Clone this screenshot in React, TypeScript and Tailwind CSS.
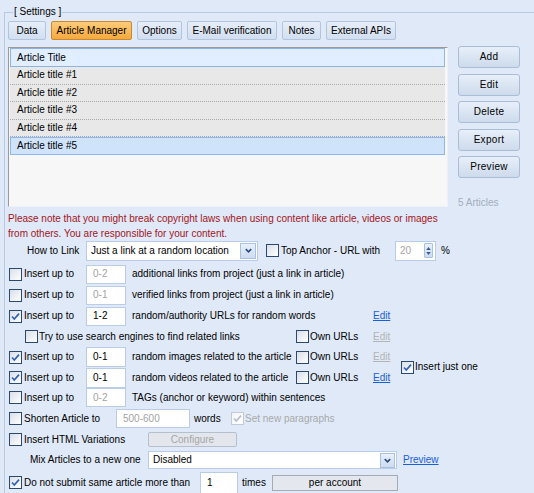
import React from "react";

function Check({ checked = false, disabled = false, className = "" }: { checked?: boolean; disabled?: boolean; className?: string }) {
  return (
    <span
      className={`inline-flex h-[13px] w-[13px] shrink-0 items-center justify-center border bg-gradient-to-br ${
        disabled ? "border-[#c3cad6] from-[#f2f4f7] to-white" : "border-[#2b4872] from-[#d9dfe8] to-white"
      } ${className}`}
    >
      {checked && (
        <svg viewBox="0 0 11 11" className="h-[11px] w-[11px]">
          <path d="M2 5.5 L4.3 8 L9 2.6" fill="none" stroke={disabled ? "#b7c0cc" : "#3564b4"} strokeWidth="1.7" />
        </svg>
      )}
    </span>
  );
}

function Input({ value, w, h = "h-[19px]", gray = false }: { value: string; w: string; h?: string; gray?: boolean }) {
  return (
    <div className={`flex shrink-0 items-center border border-[#b9cde6] bg-white pl-[6px] ${w} ${h} ${gray ? "text-[#a3a3a3]" : "text-black"}`}>
      {value}
    </div>
  );
}

function Arrow({ size }: { size: string }) {
  return (
    <div className={`flex shrink-0 items-center justify-center border border-[#a9c1e0] bg-gradient-to-b from-[#e8f0fb] to-[#cddcf0] ${size}`}>
      <svg viewBox="0 0 10 10" className="h-[9px] w-[9px]">
        <path d="M2 3.5 L5 6.5 L8 3.5" fill="none" stroke="#2e4b7e" strokeWidth="1.8" />
      </svg>
    </div>
  );
}

function Tab({ label, w, active = false }: { label: string; w: string; active?: boolean }) {
  return (
    <div
      className={`flex h-[19px] shrink-0 items-center justify-center rounded-[2px] border bg-gradient-to-b ${w} ${
        active ? "border-[#c9892e] from-[#fccb78] to-[#f6a93c]" : "border-[#b2c5dd] from-[#e6eef9] to-[#d2dff0]"
      }`}
    >
      {label}
    </div>
  );
}

function SideButton({ label }: { label: string }) {
  return (
    <div className="flex h-[22px] w-[62px] items-center justify-center rounded-[3px] border border-[#a9bdd6] bg-gradient-to-b from-[#e7eff9] to-[#cedbec] tracking-[0.3px]">
      {label}
    </div>
  );
}

const rows = ["Article title #1", "Article title #2", "Article title #3", "Article title #4"];

export default function App() {
  return (
    <div className="h-[493px] w-[534px] overflow-hidden bg-[#dfe9f8] font-['Liberation_Sans',Arial,sans-serif] text-[10px] leading-none text-black">
      <fieldset className="ml-[4px] mt-[6px] w-[560px] border border-[#b7cae2] pl-[3px] pt-[3px]">
        <legend className="ml-[5px] px-[1px] text-[10px] leading-[12px]">[ Settings ]</legend>

        {/* tabs */}
        <div className="flex gap-[5px]">
          <Tab label="Data" w="w-[38px]" />
          <Tab label="Article Manager" w="w-[81px]" active />
          <Tab label="Options" w="w-[45px]" />
          <Tab label="E-Mail verification" w="w-[90px]" />
          <Tab label="Notes" w="w-[39px]" />
          <Tab label="External APIs" w="w-[70px]" />
        </div>

        {/* list + buttons */}
        <div className="mt-[6px] flex">
          <div className="mt-[1px] h-[160px] w-[440px] border-b border-l border-r border-t border-b-[#eef2f8] border-l-[#9a9a9a] border-r-[#eef2f8] border-t-[#9a9a9a] bg-[#f7f7f7] pl-[1px] pr-[2px]">
            <div className="flex h-[19px] items-center border-[1.5px] border-[#8fb3e2] bg-[#e1eeff] pl-[6px]">Article Title</div>
            {rows.map((r) => (
              <div key={r} className="flex h-[17.5px] items-center border-b border-dotted border-[#a8a8a8] bg-[#e8e8e8] pl-[7px]">
                {r}
              </div>
            ))}
            <div className="flex h-[17.5px] items-center border border-[#8db5ee] bg-[#cfe3fb] pl-[6px]">Article title #5</div>
          </div>
          <div className="ml-[10px] flex flex-col gap-[5.5px]">
            <SideButton label="Add" />
            <SideButton label="Edit" />
            <SideButton label="Delete" />
            <SideButton label="Export" />
            <SideButton label="Preview" />
            <div className="mt-[13px] leading-[12px] text-[#a4adbb]">5 Articles</div>
          </div>
        </div>

        {/* warning */}
        <div className="mt-[2px] leading-[15px] text-[#a3151b]">
          Please note that you might break copyright laws when using content like article, videos or images
          <br />
          from others. You are responsible for your content.
        </div>

        {/* how to link */}
        <div className="flex h-[20px] items-center">
          <span className="ml-[19px] w-[59px]">How to Link</span>
          <div className="flex h-[20px] w-[172px] items-center justify-between border border-[#b9cde6] bg-white pl-[4px] pr-[1px]">
            <span>Just a link at a random location</span>
            <Arrow size="h-[16px] w-[16px]" />
          </div>
          <Check className="ml-[8px]" />
          <span className="ml-[2px] w-[114px]">Top Anchor - URL with</span>
          <div className="flex h-[20px] w-[41px] items-center justify-between border border-[#b9cde6] bg-white pl-[4px] pr-[2px] text-[#a3a3a3]">
            <span>20</span>
            <div className="flex h-[15px] w-[9px] flex-col items-center justify-center gap-[2px] rounded-[1px] border border-[#a9c1e0] bg-gradient-to-b from-[#e8f0fb] to-[#cddcf0]">
              <svg viewBox="0 0 6 4" className="h-[3px] w-[5px]"><path d="M0 4 L3 0 L6 4Z" fill="#3b5a8c" /></svg>
              <svg viewBox="0 0 6 4" className="h-[3px] w-[5px]"><path d="M0 0 L3 4 L6 0Z" fill="#3b5a8c" /></svg>
            </div>
          </div>
          <span className="ml-[5px]">%</span>
        </div>

        <div className="mt-[3px]" />

        {/* row 1 */}
        <div className="flex h-[21px] items-center">
          <div className="flex w-[78px] items-center">
            <Check className="ml-[1px]" />
            <span className="ml-[2px]">Insert up to</span>
          </div>
          <Input value="0-2" w="w-[40px]" gray />
          <span className="ml-[6px]">additional links from project (just a link in article)</span>
        </div>

        {/* row 2 */}
        <div className="flex h-[21px] items-center">
          <div className="flex w-[78px] items-center">
            <Check className="ml-[1px]" />
            <span className="ml-[2px]">Insert up to</span>
          </div>
          <Input value="0-1" w="w-[40px]" gray />
          <span className="ml-[6px]">verified links from project (just a link in article)</span>
        </div>

        {/* row 3 */}
        <div className="flex h-[21px] items-center">
          <div className="flex w-[78px] items-center">
            <Check checked className="ml-[1px]" />
            <span className="ml-[2px]">Insert up to</span>
          </div>
          <Input value="1-2" w="w-[40px]" />
          <span className="ml-[6px] w-[241px]">random/authority URLs for random words</span>
          <span className="text-[#1a5fd6] underline">Edit</span>
        </div>

        {/* row 4 */}
        <div className="flex h-[20px] items-center">
          <div className="flex w-[288px] items-center">
            <Check className="ml-[17px]" />
            <span className="ml-[1px]">Try to use search engines to find related links</span>
          </div>
          <div className="flex w-[77px] items-center">
            <Check />
            <span className="ml-[1px]">Own URLs</span>
          </div>
          <span className="text-[#b4b4b4] underline">Edit</span>
        </div>

        {/* rows 5 + 6 */}
        <div className="flex items-center">
          <div className="flex w-[393px] flex-col">
            <div className="flex h-[21px] items-center">
              <div className="flex w-[78px] items-center">
                <Check checked className="ml-[1px]" />
                <span className="ml-[2px]">Insert up to</span>
              </div>
              <Input value="0-1" w="w-[40px]" h="h-[20px]" />
              <span className="ml-[6px] w-[164px]">random images related to the article</span>
              <div className="flex w-[77px] items-center">
                <Check />
                <span className="ml-[1px]">Own URLs</span>
              </div>
              <span className="text-[#b4b4b4] underline">Edit</span>
            </div>
            <div className="flex h-[20px] items-center">
              <div className="flex w-[78px] items-center">
                <Check checked className="ml-[1px]" />
                <span className="ml-[2px]">Insert up to</span>
              </div>
              <Input value="0-1" w="w-[40px]" h="h-[20px]" />
              <span className="ml-[6px] w-[164px]">random videos related to the article</span>
              <div className="flex w-[77px] items-center">
                <Check />
                <span className="ml-[1px]">Own URLs</span>
              </div>
              <span className="text-[#1a5fd6] underline">Edit</span>
            </div>
          </div>
          <div className="flex items-center">
            <Check checked />
            <span className="ml-[1px]">Insert just one</span>
          </div>
        </div>

        {/* row 7 */}
        <div className="flex h-[20px] items-center">
          <div className="flex w-[78px] items-center">
            <Check className="ml-[1px]" />
            <span className="ml-[2px]">Insert up to</span>
          </div>
          <Input value="0-2" w="w-[40px]" gray />
          <span className="ml-[6px]">TAGs (anchor or keyword) within sentences</span>
        </div>

        {/* row 8 */}
        <div className="flex h-[22px] items-center">
          <div className="flex w-[108px] items-center">
            <Check className="ml-[1px]" />
            <span className="ml-[2px]">Shorten Article to</span>
          </div>
          <Input value="500-600" w="w-[74px]" gray />
          <span className="ml-[4px] w-[37px]">words</span>
          <Check checked disabled />
          <span className="ml-[1px] text-[#a9a9a9]">Set new paragraphs</span>
        </div>

        {/* row 9 */}
        <div className="flex h-[20px] items-center">
          <div className="flex w-[140px] items-center">
            <Check className="ml-[1px]" />
            <span className="ml-[2px]">Insert HTML Variations</span>
          </div>
          <div className="flex h-[15px] w-[89px] items-center justify-center rounded-[2px] border border-[#b6c0cc] bg-[#e3e7ed] text-[#a5a5a5]">
            Configure
          </div>
        </div>

        {/* row 10 */}
        <div className="flex h-[21px] items-center">
          <span className="ml-[22px] w-[118px]">Mix Articles to a new one</span>
          <div className="flex h-[18px] w-[249px] items-center justify-between border border-[#b9cde6] bg-white pl-[4px] pr-[1px]">
            <span>Disabled</span>
            <Arrow size="h-[15px] w-[15px]" />
          </div>
          <span className="ml-[6px] text-[#1a5fd6] underline">Preview</span>
        </div>

        {/* row 11 */}
        <div className="flex h-[24px] items-center">
          <div className="flex w-[192px] items-center">
            <Check checked className="ml-[1px]" />
            <span className="ml-[2px]">Do not submit same article more than</span>
          </div>
          <Input value="1" w="w-[38px]" h="h-[22px]" />
          <span className="ml-[4px] w-[30px]">times</span>
          <div className="flex h-[16px] w-[126px] items-center justify-center border border-[#a3abb6] bg-[#e4e8ee]">
            per account
          </div>
        </div>
      </fieldset>
    </div>
  );
}
